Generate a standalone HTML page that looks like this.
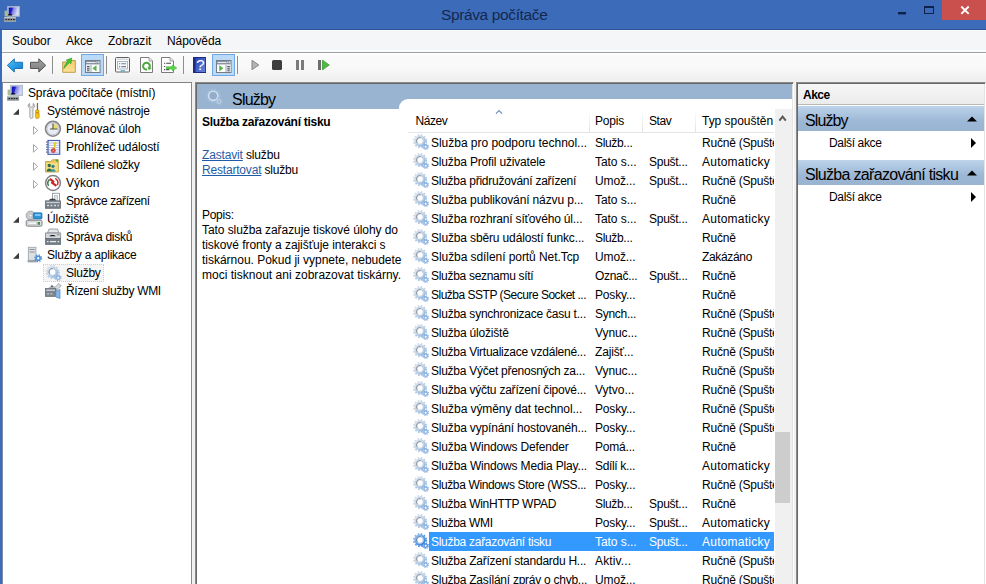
<!DOCTYPE html>
<html lang="cs"><head><meta charset="utf-8"><title>Správa počítače</title>
<style>
*{box-sizing:border-box;margin:0;padding:0}
html,body{width:986px;height:584px;overflow:hidden}
body{position:relative;background:#f0f0f0;font-family:"Liberation Sans",sans-serif;font-size:12px;color:#000;line-height:15px}
body>div,body>span,body>svg{position:absolute}
.t{position:absolute;white-space:nowrap;line-height:15px}
.t.b{font-size:16px;line-height:20px}
.t.b.tt{font-size:15.5px}
#titlebar{left:0;top:0;width:986px;height:30px;background:#3c6cb9;border-bottom:1px solid #2e5498}
#lborder{left:0;top:30px;width:2px;height:554px;background:#3c6cb9}
#close{left:942px;top:0;width:44px;height:20px;background:#c9504d}
#menubar{left:2px;top:30px;width:984px;height:22px;background:#f5f6f7;border-top:1px solid #fff;border-bottom:2px solid #fafbfc}
#menuline{left:2px;top:52px;width:984px;height:1px;background:#a0a0a0}
#toolbar{left:2px;top:53px;width:984px;height:25px;border-top:1px solid #fff;background:linear-gradient(#fbfbfb,#f8f8f8 60%,#f0f0f0)}
#tbi{left:0;top:53px}
#tree{left:2px;top:82px;width:190px;height:502px;background:#fff;border-top:1px solid #828282;border-right:1px solid #8a8a8a;border-left:1px solid #7f8ea6}
#treei{left:0;top:82px}
#tsel{left:43px;top:264px;width:61px;height:18px;background:#f5f5f5;border:1px dotted #cfcfcf}
#center{left:195px;top:82px;width:599px;height:502px;background:#fff;border-left:1px solid #8a8a8a;border-top:1px solid #8a8a8a;border-right:1px solid #fff;box-shadow:inset 1px 1px 0 #686868,inset -1px 0 0 #e3e3e3}
#chead{left:197px;top:84px;width:595px;height:25px;background:#99b4d1}
#listbg{left:399px;top:99px;width:393px;height:485px;background:#fff;border-top-left-radius:9px}
#hline{left:408px;top:132px;width:366px;height:1px;background:#e5e5e5}
.hsep{width:1px;top:110px;height:22px;background:linear-gradient(#fff,#e2e2e2)}
#list{left:0;top:0;width:774px;height:584px;overflow:hidden}
.row{position:absolute;left:411px;width:363px;height:19px}
.row .gear{position:absolute;left:1px;top:1px}
.row .c{position:absolute;top:3px;white-space:nowrap;line-height:15px}
.row .n{left:20px}
.row .p{left:184px}
.row .s{left:238px}
.row .ty{left:291px;width:72px;overflow:hidden}
.row.sel::before{content:"";position:absolute;left:18px;top:0;width:345px;height:19px;background:#3399ff}
.row.sel .c{color:#fff}
#vsb{left:775px;top:109px;width:17px;height:475px;background:#f0f0f0}
#thumb{left:775px;top:432px;width:15px;height:71px;background:#cdcdcd}
#actions{left:796px;top:82px;width:190px;height:502px;background:#fff;border-left:1px solid #8a8a8a;border-top:1px solid #8a8a8a;border-right:1px solid #fff;box-shadow:inset 1px 1px 0 #686868,inset -1px 0 0 #e3e3e3}
#ahead{left:798px;top:84px;width:186px;height:21px;background:linear-gradient(#f6f6f6,#ececec);border-bottom:1px solid #b8b8b8}
.asec{left:798px;width:186px;height:25px;background:linear-gradient(#bdd3ea,#9db8d6 60%,#99b4d1)}
a{color:#1f5ca8;text-decoration:underline}

</style></head>
<body>
<svg width="0" height="0" style="position:absolute"><defs>
<linearGradient id="gb" x1="0" y1="0" x2="1" y2="1"><stop offset="0" stop-color="#58c4f6"/><stop offset=".5" stop-color="#2a9ee6"/><stop offset="1" stop-color="#0d78cc"/></linearGradient>
<linearGradient id="gg" x1="0" y1="0" x2="0" y2="1"><stop offset="0" stop-color="#a2a2a2"/><stop offset="1" stop-color="#7c7c7c"/></linearGradient>
<linearGradient id="gr1" x1="0" y1="0" x2="1" y2="1"><stop offset="0" stop-color="#d9e2ec"/><stop offset=".55" stop-color="#bdd0e5"/><stop offset="1" stop-color="#86b2e2"/></linearGradient>
<linearGradient id="gr2" x1="0" y1="0" x2="1" y2="1"><stop offset="0" stop-color="#9cc4f0"/><stop offset=".55" stop-color="#5c9ce6"/><stop offset="1" stop-color="#2f7ad8"/></linearGradient>
<g id="gear"><circle cx="8" cy="7" r="6.100" fill="none" stroke="url(#gr1)" stroke-width="1.900" stroke-dasharray="1.650 1.544"/><circle cx="8" cy="7" r="4.600" fill="none" stroke="url(#gr1)" stroke-width="2.200"/><circle cx="8" cy="7" r="3.400" fill="#fbfdff" stroke="#a9b4c0" stroke-width=".7"/><path d="M5.100 8.800a3.400 3.400 0 0 1 3.500-5.200" fill="none" stroke="#7f8b98" stroke-width=".9"/><circle cx="13.700" cy="12.700" r="2.700" fill="none" stroke="#8db4df" stroke-width="1.300" stroke-dasharray="1.100 1.020"/><circle cx="13.700" cy="12.700" r="1.700" fill="#fff" stroke="#8db4df" stroke-width="1.400"/></g>
<g id="gears"><circle cx="8" cy="7" r="6.100" fill="none" stroke="url(#gr2)" stroke-width="1.900" stroke-dasharray="1.650 1.544"/><circle cx="8" cy="7" r="4.600" fill="none" stroke="url(#gr2)" stroke-width="2.200"/><circle cx="8" cy="7" r="3.400" fill="#fbfdff" stroke="#7fa4d0" stroke-width=".7"/><path d="M5.100 8.800a3.400 3.400 0 0 1 3.500-5.200" fill="none" stroke="#5d7896" stroke-width=".9"/><circle cx="13.700" cy="12.700" r="2.700" fill="none" stroke="#5595e4" stroke-width="1.300" stroke-dasharray="1.100 1.020"/><circle cx="13.700" cy="12.700" r="1.700" fill="#fff" stroke="#5595e4" stroke-width="1.400"/></g>
<linearGradient id="scr" x1="0" y1="0" x2="1" y2=".25"><stop offset="0" stop-color="#0a0ab4"/><stop offset=".38" stop-color="#2424cc"/><stop offset=".5" stop-color="#7c7ce0"/><stop offset="1" stop-color="#d6def8"/></linearGradient>
<g id="pc"><rect x="3.300" y=".2" width="12.400" height="10.300" fill="#c3cddd" stroke="#9fa9bb" stroke-width=".6"/><rect x="4.700" y="1.500" width="9.600" height="7.600" fill="url(#scr)"/><rect x=".6" y="4.600" width="2.700" height="5.800" fill="#a6bc96"/><path d="M3.800 9.400a2.300 1.700 0 0 1 4.600 0z" fill="#0e0e16"/><rect x=".1" y="11" width="11.800" height="4.700" fill="#8b9595"/><rect x=".1" y="11" width="11.800" height="1.100" fill="#bcc4c4"/><path d="M1.500 13.600h1.600M4 13.600h1.600M6.500 13.600h1.600M9 13.600h1.600" stroke="#20242a" stroke-width="1.400"/><rect x=".1" y="14.700" width="11.800" height="1" fill="#a9b1b1"/></g>
</defs></svg>
<div id="titlebar"></div>
<div id="lborder"></div>
<div id="close"></div>
<svg id="wbtn" style="left:890px;top:0" width="96" height="30" viewBox="890 0 96 30"><rect x="898" y="12" width="8" height="2.4" fill="#0e2148"/><rect x="924.5" y="7" width="9" height="6.5" fill="none" stroke="#0e2148" stroke-width="1"/><rect x="924" y="6" width="10" height="2" fill="#0e2148"/><path d="M961.3 6.5l7.4 7.4M968.7 6.5l-7.4 7.4" stroke="#fff" stroke-width="1.9" fill="none"/></svg>
<svg style="left:4px;top:6px" width="16" height="16" viewBox="0 0 16 16"><use href="#pc"/></svg>
<div id="menubar"></div>
<div id="menuline"></div>
<div id="toolbar"></div>
<svg id="tbi" width="340" height="26" viewBox="0 53 340 26">
<path d="M7.300 65.400l7-6.600v3.500h8.300v6.200h-8.300v3.500z" fill="url(#gb)" stroke="#2272b4" stroke-width="1" stroke-linejoin="round"/>
<path d="M45.800 65.400l-7-6.600v3.500h-8.300v6.200h8.300v3.500z" fill="url(#gg)" stroke="#555" stroke-width="1" stroke-linejoin="round"/>
<rect x="52" y="56" width="1" height="18" fill="#8e8e8e"/>
<linearGradient id="gf" x1="0" y1="0" x2="0" y2="1"><stop offset="0" stop-color="#f6cc6a"/><stop offset="1" stop-color="#fbe196"/></linearGradient><path d="M62.700 62h4.800l1.200-1.500h6.600v11.800h-12.600z" fill="url(#gf)" stroke="#b8923f" stroke-width=".9"/><path d="M63.800 68.600c.8-3.600 2.200-5.600 3.800-7l-1.400-1.500 5.600-2-.9 5.700-1.400-1.300c-2 1.700-3.600 3.800-5.700 6.100z" fill="#45c232" stroke="#349a28" stroke-width=".6"/>
<rect x="81.500" y="54.500" width="22" height="21" fill="#badaf8" stroke="#6fa8e6"/>
<rect x="85.500" y="60.500" width="14.500" height="12" fill="#fff" stroke="#737d8a"/><rect x="86" y="61" width="13.500" height="3" fill="#8a93a0"/><rect x="86.500" y="62" width="9" height="1" fill="#e8ecf0"/><rect x="96.300" y="61.600" width="1.100" height="1.100" fill="#fff"/><rect x="98" y="61.600" width="1.100" height="1.100" fill="#fff"/><rect x="86" y="64" width="13.500" height="1" fill="#c9d0d8"/><rect x="86" y="65" width="4.500" height="7" fill="#eef1f4"/><rect x="87" y="66" width="2.500" height="1.300" fill="#4a5058"/><rect x="87" y="68.200" width="2.500" height="1.300" fill="#4a5058"/><rect x="87" y="70.300" width="2.500" height="1" fill="#4a5058"/><rect x="90.500" y="65" width="1" height="7" fill="#9aa3ae"/><path d="M96.200 65.800v5l-3.400-2.500z" fill="#58b848" stroke="#3f9a33" stroke-width=".5"/>
<rect x="106" y="56" width="1" height="18" fill="#8e8e8e"/>
<rect x="115.500" y="57.500" width="14" height="14.500" rx="1" fill="#fff" stroke="#5f5f5f"/><rect x="116.500" y="58.500" width="12" height="1.500" fill="#d6dae0"/><rect x="117.500" y="61.500" width="10" height="7.500" fill="#f7f9fb" stroke="#9fb2c4" stroke-width=".9"/><path d="M119 63.800h1.200M121.300 63.800h4.700M119 66.600h1.200M121.300 66.600h4.700" stroke="#6f8296" stroke-width="1.100"/><rect x="120.500" y="70.200" width="4.500" height="1.300" fill="#5fa8b8"/>
<path d="M140.500 57.500h8.500l3.500 3.500v11.500h-12z" fill="#fff" stroke="#7b7b7b"/><path d="M149 57.500v3.500h3.500" fill="#eee" stroke="#8b8b8b" stroke-width=".8"/><path d="M147.090 69.550A3.400 3.400 0 1 1 149.700 67.360" fill="none" stroke="#49a93a" stroke-width="2"/><path d="M151.900 67.900L147.500 66.500L148.700 70.300z" fill="#49a93a"/>
<path d="M161.500 57.500h8.500l3.500 3.500v11.500h-12z" fill="#fff" stroke="#7b7b7b"/><path d="M170 57.500v3.500h3.500" fill="#eee" stroke="#8b8b8b" stroke-width=".8"/><path d="M164 63.300h1.200M166.200 63.300h4.800M164 66.500h1.200M164 69.600h1.200M166.200 69.600h3" stroke="#444" stroke-width="1.100"/><path d="M166.400 66.800h5.800v-1.700l4.600 2.800-4.600 2.800v-1.700h-5.800z" fill="#5ad548" stroke="#3fae32" stroke-width=".6"/>
<rect x="183" y="56" width="1" height="18" fill="#8e8e8e"/>
<linearGradient id="gh" x1="0" y1="0" x2="1" y2="1"><stop offset="0" stop-color="#2a42b4"/><stop offset="1" stop-color="#6686dc"/></linearGradient><rect x="193" y="57" width="13" height="16" fill="#1c2c84"/><rect x="195.500" y="58" width="9.700" height="14" fill="url(#gh)"/><text x="200.400" y="70.300" font-family="Liberation Sans,sans-serif" font-size="15.500" fill="#fff" text-anchor="middle">?</text>
<rect x="212.500" y="54.500" width="22" height="21" fill="#badaf8" stroke="#6fa8e6"/>
<rect x="216.500" y="60.500" width="14.500" height="12" fill="#fff" stroke="#737d8a"/><rect x="217" y="61" width="13.500" height="3" fill="#8a93a0"/><rect x="217.500" y="62" width="9" height="1" fill="#e8ecf0"/><rect x="227.300" y="61.600" width="1.100" height="1.100" fill="#fff"/><rect x="229" y="61.600" width="1.100" height="1.100" fill="#fff"/><rect x="217" y="64" width="13.500" height="1" fill="#c9d0d8"/><rect x="226.500" y="65" width="4" height="7" fill="#eef1f4"/><rect x="227.300" y="66" width="2.500" height="1.300" fill="#4a5058"/><rect x="227.300" y="68.200" width="2.500" height="1.300" fill="#4a5058"/><rect x="227.300" y="70.300" width="2.500" height="1" fill="#4a5058"/><rect x="225.500" y="65" width="1" height="7" fill="#9aa3ae"/><path d="M219.600 65.800v5l3.400-2.500z" fill="#58b848" stroke="#3f9a33" stroke-width=".5"/>
<rect x="237" y="56" width="1" height="18" fill="#8e8e8e"/>
<path d="M252 60.300l6.800 4.700-6.800 4.700z" fill="#b4b4b4" stroke="#7d7d7d" stroke-width=".9"/>
<rect x="272" y="60" width="10" height="10" rx="1.500" fill="#3d3d3d"/>
<rect x="296" y="60" width="3" height="10" fill="#7b7b7b"/><rect x="301" y="60" width="3" height="10" fill="#7b7b7b"/>
<rect x="318" y="60" width="3" height="10" fill="#6e6e6e"/><path d="M322.500 60.200l6.800 4.800-6.800 4.800z" fill="#52b843" stroke="#3a9a2e" stroke-width=".8"/>
</svg>
<div id="tree"></div>
<div id="tsel"></div>
<svg id="treei" width="192" height="220" viewBox="0 82 192 220">
<g fill="#3a3a3a"><path d="M19 108.800v5.900h-5.900z"/><path d="M19 216.800v5.900h-5.900z"/><path d="M19 252.800v5.900h-5.900z"/></g>
<g fill="#fff" stroke="#a6a6a6" stroke-width="1"><path d="M33.500 126.600l4.200 3.800-4.200 3.800z"/><path d="M33.500 144.600l4.200 3.800-4.200 3.800z"/><path d="M33.500 162.600l4.200 3.800-4.200 3.800z"/><path d="M33.500 180.600l4.200 3.800-4.200 3.800z"/></g>
<g transform="translate(7 85)"><use href="#pc"/></g>
<g><path d="M29.600 103.500c-1.700.8-2 3.300-.3 4.400l.6.500v8.700c0 1.900 3 1.900 3 0v-8.700l.6-.5c1.700-1.100 1.400-3.600-.3-4.400v2.700l-1.100.8h-1.400l-1.100-.8z" fill="#ececec" stroke="#8a8a8a" stroke-width=".8"/><rect x="36.800" y="103" width="1.300" height="7.500" fill="#8a6a3a"/><path d="M35.600 110.200h3.400v2h-.4v1h.6v4c0 1.800-3.800 1.800-3.800 0v-4h.6v-1h-.4z" fill="#f2c211" stroke="#b88a0a" stroke-width=".6"/><rect x="35.600" y="112.200" width="3.400" height="1" fill="#c87f10"/></g>
<g><circle cx="52.900" cy="128.800" r="7.400" fill="#e9ecf8" stroke="#868686" stroke-width="1.600"/><circle cx="52.900" cy="128.800" r="5.900" fill="none" stroke="#c7c9d3" stroke-width="1"/><path d="M53.300 123.800a5.200 5.200 0 0 1 4.800 4.700h-4.800z" fill="#e9da6c"/><path d="M53 123.500v5.600M50 129h7.500" stroke="#55552a" stroke-width="1.100" fill="none"/></g>
<g><rect x="48" y="140.500" width="11.700" height="13.800" fill="#fff" stroke="#4b61ad" stroke-width="1.200"/><path d="M49 143h10M49 145.300h10M49 147.600h10M49 149.900h10M49 152.200h10" stroke="#a9b9ea" stroke-width="1"/><path d="M46 142.200h2.800M46 144.700h2.800M46 147.200h2.800M46 149.700h2.800M46 152.200h2.800" stroke="#6a7cab" stroke-width="1.200"/><path d="M54.500 142.300l1.200.2-.6 6.500h-1.600z" fill="#e2c81c"/><circle cx="55" cy="143.300" r="1.400" fill="#e6d02a"/><circle cx="53.300" cy="150.600" r="2.400" fill="#d7323a"/><path d="M52.400 149.700l1.800 1.800M54.200 149.700l-1.800 1.800" stroke="#f7c8c8" stroke-width=".7"/></g>
<g><path d="M45.600 161.500h5.400l1.300-1.700h6v12.200h-12.700z" fill="#e9cd63" stroke="#c2a040" stroke-width=".9"/><path d="M46.200 163h11.600v8.500h-11.600z" fill="#f2dc85"/><path d="M55 159.800l3-.4-.4 3z" fill="#48a23c"/><circle cx="49.300" cy="165.500" r="1.700" fill="#2f6b4a"/><path d="M46.600 171.500c0-4 5.400-4 5.400 0z" fill="#2f6b4a"/><circle cx="53" cy="166.300" r="1.600" fill="#2f7f8a"/><path d="M50.600 171.800c0-3.800 5-3.800 5 0z" fill="#3a97a2"/></g>
<g><circle cx="53" cy="183" r="7.400" fill="#fff" stroke="#828282" stroke-width="1.500"/><path d="M48.600 185.800a5 5 0 0 1 .8-6.200" fill="none" stroke="#2f8050" stroke-width="1.500"/><path d="M55.200 178.400a5 5 0 0 1 2.200 6.800" fill="none" stroke="#cf2626" stroke-width="1.500"/><path d="M49.800 178.800l3.400 2.600-1 1.400 4.200 3" fill="none" stroke="#cf2020" stroke-width="2.200"/></g>
<g><rect x="52.500" y="193.300" width="7" height="10" fill="#fff" stroke="#8f959b" stroke-width=".9"/><rect x="54.500" y="195.500" width="3" height="5" fill="#dfe3e7" stroke="#a9afb5" stroke-width=".6"/><path d="M49 200.800c0-3 7-3 7 0z" fill="#3a4047"/><rect x="45.300" y="200.800" width="15.400" height="7.600" fill="#737b84" stroke="#5d656d" stroke-width=".6"/><rect x="46.300" y="201.800" width="13.400" height="1.400" fill="#c9ced4"/><path d="M47 205.500h2M50.500 205.500h2M54 205.500h2M57.500 205.500h1.500" stroke="#d8dce0" stroke-width="1.600"/></g>
<g><circle cx="30.600" cy="215.600" r="4.500" fill="#c9cbcd" stroke="#9a9c9e" stroke-width=".8"/><circle cx="30.600" cy="215.600" r="1.400" fill="#f4f4f4" stroke="#a9abad" stroke-width=".5"/><rect x="33.300" y="212.800" width="8.700" height="6.200" rx="1" fill="#2b93d6" stroke="#1a6fae" stroke-width=".7"/><rect x="35" y="214.200" width="5.600" height="1.600" fill="#8fd0f4"/><rect x="26.200" y="220.200" width="15.800" height="6" rx="1.300" fill="#dcdedf" stroke="#717578" stroke-width=".9"/><rect x="28" y="222" width="8.500" height="2.400" fill="#f6f6f6" stroke="#b5b8ba" stroke-width=".5"/><rect x="37.600" y="222" width="2.400" height="2.800" fill="#3f8f4a"/></g>
<g><path d="M47.500 233l1.500-4h8.500l1.500 4z" fill="#e3e5e7" stroke="#8b9096" stroke-width=".8"/><rect x="45.400" y="233" width="15.300" height="5.400" fill="#d3d6da" stroke="#80868c" stroke-width=".8"/><path d="M49.300 236.300c1-1.700 5.400-1.700 6.400 0z" fill="#17191b"/><rect x="56.800" y="234" width="2.800" height="1.400" fill="#9aa0a6"/><rect x="45.400" y="238.600" width="15.300" height="6" fill="#747c85" stroke="#5c646c" stroke-width=".6"/><path d="M47 241.600h1.600M50 241.600h6M57.500 241.600h1.600" stroke="#e9ecee" stroke-width="1.300"/></g>
<g><rect x="28.300" y="247.300" width="7.600" height="13" fill="#dde0e3" stroke="#9a9fa5" stroke-width=".8"/><path d="M29.500 249.500h5.200M29.500 252h5.200" stroke="#8d9298" stroke-width="1.100"/><rect x="27.600" y="260" width="9" height="2.400" fill="#9ba1a7"/><circle cx="38.200" cy="258.300" r="3.300" fill="none" stroke="#4d8fd6" stroke-width="1.500" stroke-dasharray="1.300 1.290"/><circle cx="38.200" cy="258.300" r="2" fill="#fff" stroke="#4d8fd6" stroke-width="1.600"/></g>
<g transform="translate(44.500 265)"><use href="#gear"/></g>
<g><path d="M53.500 288.500l5.500-5 2.200 2.300-4.700 4.200z" fill="#d9dde1" stroke="#8b9197" stroke-width=".7"/><circle cx="52" cy="286.800" r="1.300" fill="#1c1c1c"/><path d="M47.500 288.300l3.500-1.800h4l-1.500 1.800z" fill="#aab0b6"/><rect x="45.300" y="288.300" width="10.700" height="8.300" fill="#7d858d" stroke="#5e666e" stroke-width=".6"/><rect x="46.300" y="289.500" width="8.700" height="1.500" fill="#c5cad0"/><path d="M47 293.800h2M50.300 293.800h2" stroke="#c5cad0" stroke-width="1.300"/><path d="M55.800 291l4.200-1.500v9l-4.200-1.500z" fill="#86b6e6" stroke="#4e86c2" stroke-width=".7"/></g>
</svg>
<div id="center"></div>
<div id="chead"></div>
<svg id="chi" style="left:204px;top:86px" width="22" height="22" viewBox="204 86 22 22"><circle cx="213.200" cy="95.800" r="6.300" fill="none" stroke="#a8c0dc" stroke-width="1.500" stroke-dasharray="1.700 1.598"/><circle cx="213.200" cy="95.800" r="4.600" fill="#90a9c7" stroke="#d2e1f1" stroke-width="1.600"/><circle cx="213.200" cy="95.800" r="2" fill="none" stroke="#9db5d2" stroke-width=".8"/><circle cx="219" cy="101.500" r="3.100" fill="none" stroke="#a9c1dc" stroke-width="1.100" stroke-dasharray="1.200 1.234"/><circle cx="219" cy="101.500" r="1.900" fill="#9cb6d4" stroke="#bdd0e7" stroke-width="1.100"/></svg>
<div id="listbg"></div>
<div id="hline"></div>
<div class="hsep" style="left:589px"></div>
<div class="hsep" style="left:642px"></div>
<div class="hsep" style="left:695px"></div>
<svg style="left:494px;top:108px" width="10" height="8" viewBox="0 0 10 8"><path d="M2 5.700l3-3 3 3" fill="none" stroke="#6a8fbf" stroke-width="1.200"/></svg>
<div id="actions"></div>
<div id="ahead"></div>
<div class="asec" style="top:106px"></div>
<div class="asec" style="top:160px"></div>
<span class="t" id="m1" style="left:12px;top:34.00px;letter-spacing:0.016px;">Soubor</span>
<span class="t" id="m2" style="left:66px;top:34.00px;letter-spacing:-0.022px;">Akce</span>
<span class="t" id="m3" style="left:108px;top:34.00px;letter-spacing:0.005px;">Zobrazit</span>
<span class="t" id="m4" style="left:167px;top:34.00px;letter-spacing:-0.077px;">Nápověda</span>
<span class="t" id="t0" style="left:28px;top:86.00px;letter-spacing:-0.138px;">Správa počítače (místní)</span>
<span class="t" id="t1" style="left:47px;top:104.00px;letter-spacing:-0.149px;">Systémové nástroje</span>
<span class="t" id="t2" style="left:66px;top:122.00px;letter-spacing:-0.030px;">Plánovač úloh</span>
<span class="t" id="t3" style="left:66px;top:140.00px;letter-spacing:-0.105px;">Prohlížeč událostí</span>
<span class="t" id="t4" style="left:66px;top:158.00px;letter-spacing:-0.277px;">Sdílené složky</span>
<span class="t" id="t5" style="left:66px;top:176.00px;letter-spacing:0.008px;">Výkon</span>
<span class="t" id="t6" style="left:66px;top:194.00px;letter-spacing:-0.397px;">Správce zařízení</span>
<span class="t" id="t7" style="left:47px;top:212.00px;letter-spacing:-0.098px;">Úložiště</span>
<span class="t" id="t8" style="left:66px;top:230.00px;letter-spacing:-0.273px;">Správa disků</span>
<span class="t" id="t9" style="left:47px;top:248.00px;letter-spacing:-0.229px;">Služby a aplikace</span>
<span class="t" id="t10" style="left:66px;top:266.00px;letter-spacing:-0.239px;">Služby</span>
<span class="t" id="t11" style="left:66px;top:284.00px;letter-spacing:-0.302px;">Řízení služby WMI</span>
<span class="t" id="d0" style="left:202px;top:115.00px;letter-spacing:-0.275px;font-weight:bold">Služba zařazování tisku</span>
<span class="t" id="d3" style="left:202px;top:208.00px;letter-spacing:-0.277px;">Popis:</span>
<span class="t" id="d4" style="left:202px;top:223.00px;letter-spacing:-0.078px;">Tato služba zařazuje tiskové úlohy do</span>
<span class="t" id="d5" style="left:202px;top:238.00px;letter-spacing:-0.063px;">tiskové fronty a zajišťuje interakci s</span>
<span class="t" id="d6" style="left:202px;top:253.00px;letter-spacing:-0.017px;">tiskárnou. Pokud ji vypnete, nebudete</span>
<span class="t" id="d7" style="left:202px;top:268.00px;letter-spacing:0.015px;">moci tisknout ani zobrazovat tiskárny.</span>
<span class="t" id="h1" style="left:415.5px;top:114.00px;letter-spacing:-0.423px;">Název</span>
<span class="t" id="h2" style="left:595px;top:114.00px;letter-spacing:-0.166px;">Popis</span>
<span class="t" id="h3" style="left:649px;top:114.00px;letter-spacing:-0.429px;">Stav</span>
<span class="t" id="h4" style="left:702px;top:114.00px;letter-spacing:-0.024px;">Typ spouštěn</span>
<span class="t" id="a0" style="left:803px;top:88.00px;letter-spacing:-0.522px;font-weight:bold">Akce</span>
<span class="t" id="a2" style="left:829px;top:136.00px;letter-spacing:-0.343px;">Další akce</span>
<span class="t" id="a4" style="left:829px;top:190.00px;letter-spacing:-0.343px;">Další akce</span>
<span class="t b tt" id="title" style="left:441px;top:5.00px;letter-spacing:-0.374px;color:#14284f">Správa počítače</span>
<span class="t b" id="ch" style="left:232px;top:90.00px;letter-spacing:-0.789px;">Služby</span>
<span class="t b" id="a1" style="left:805px;top:111.00px;letter-spacing:-0.905px;">Služby</span>
<span class="t b" id="a3" style="left:805px;top:165.00px;letter-spacing:-0.691px;">Služba zařazování tisku</span>
<span class="t" id="d1" style="left:202px;top:148px;letter-spacing:-0.156px;"><a>Zastavit</a> službu</span>
<span class="t" id="d2" style="left:202px;top:163px;letter-spacing:-0.188px;"><a>Restartovat</a> službu</span>
<div id="list">
<div class="row" style="top:133px"><svg class="gear" width="17" height="17" viewBox="0 0 17 17"><use href="#gear"/></svg><span class="c n" id="n0" style="letter-spacing:-0.027px;">Služba pro podporu technol...</span><span class="c p" id="p0" style="letter-spacing:-0.329px;">Služb...</span><span class="c ty" id="y0" style="letter-spacing:-0.215px;">Ručně (Spuště</span></div>
<div class="row" style="top:152px"><svg class="gear" width="17" height="17" viewBox="0 0 17 17"><use href="#gear"/></svg><span class="c n" id="n1" style="letter-spacing:-0.164px;">Služba Profil uživatele</span><span class="c p" id="p1" style="letter-spacing:-0.059px;">Tato s...</span><span class="c s" id="s1" style="letter-spacing:-0.273px;">Spušt...</span><span class="c ty" id="y1" style="letter-spacing:0.231px;">Automaticky</span></div>
<div class="row" style="top:171px"><svg class="gear" width="17" height="17" viewBox="0 0 17 17"><use href="#gear"/></svg><span class="c n" id="n2" style="letter-spacing:-0.250px;">Služba přidružování zařízení</span><span class="c p" id="p2" style="letter-spacing:-0.121px;">Umož...</span><span class="c s" id="s2" style="letter-spacing:-0.273px;">Spušt...</span><span class="c ty" id="y2" style="letter-spacing:-0.215px;">Ručně (Spuště</span></div>
<div class="row" style="top:190px"><svg class="gear" width="17" height="17" viewBox="0 0 17 17"><use href="#gear"/></svg><span class="c n" id="n3" style="letter-spacing:-0.131px;">Služba publikování názvu p...</span><span class="c p" id="p3" style="letter-spacing:-0.059px;">Tato s...</span><span class="c ty" id="y3" style="letter-spacing:-0.177px;">Ručně</span></div>
<div class="row" style="top:209px"><svg class="gear" width="17" height="17" viewBox="0 0 17 17"><use href="#gear"/></svg><span class="c n" id="n4" style="letter-spacing:-0.176px;">Služba rozhraní síťového úl...</span><span class="c p" id="p4" style="letter-spacing:-0.059px;">Tato s...</span><span class="c s" id="s4" style="letter-spacing:-0.273px;">Spušt...</span><span class="c ty" id="y4" style="letter-spacing:0.231px;">Automaticky</span></div>
<div class="row" style="top:228px"><svg class="gear" width="17" height="17" viewBox="0 0 17 17"><use href="#gear"/></svg><span class="c n" id="n5" style="letter-spacing:-0.138px;">Služba sběru událostí funkc...</span><span class="c p" id="p5" style="letter-spacing:-0.329px;">Služb...</span><span class="c ty" id="y5" style="letter-spacing:-0.177px;">Ručně</span></div>
<div class="row" style="top:247px"><svg class="gear" width="17" height="17" viewBox="0 0 17 17"><use href="#gear"/></svg><span class="c n" id="n6" style="letter-spacing:-0.068px;">Služba sdílení portů Net.Tcp</span><span class="c p" id="p6" style="letter-spacing:-0.121px;">Umož...</span><span class="c ty" id="y6" style="letter-spacing:-0.338px;">Zakázáno</span></div>
<div class="row" style="top:266px"><svg class="gear" width="17" height="17" viewBox="0 0 17 17"><use href="#gear"/></svg><span class="c n" id="n7" style="letter-spacing:-0.298px;">Služba seznamu sítí</span><span class="c p" id="p7" style="letter-spacing:-0.311px;">Označ...</span><span class="c s" id="s7" style="letter-spacing:-0.273px;">Spušt...</span><span class="c ty" id="y7" style="letter-spacing:-0.177px;">Ručně</span></div>
<div class="row" style="top:285px"><svg class="gear" width="17" height="17" viewBox="0 0 17 17"><use href="#gear"/></svg><span class="c n" id="n8" style="letter-spacing:-0.495px;">Služba SSTP (Secure Socket ...</span><span class="c p" id="p8" style="letter-spacing:-0.175px;">Posky...</span><span class="c ty" id="y8" style="letter-spacing:-0.177px;">Ručně</span></div>
<div class="row" style="top:304px"><svg class="gear" width="17" height="17" viewBox="0 0 17 17"><use href="#gear"/></svg><span class="c n" id="n9" style="letter-spacing:-0.236px;">Služba synchronizace času t...</span><span class="c p" id="p9" style="letter-spacing:-0.282px;">Synch...</span><span class="c ty" id="y9" style="letter-spacing:-0.215px;">Ručně (Spuště</span></div>
<div class="row" style="top:323px"><svg class="gear" width="17" height="17" viewBox="0 0 17 17"><use href="#gear"/></svg><span class="c n" id="n10" style="letter-spacing:-0.201px;">Služba úložiště</span><span class="c p" id="p10" style="letter-spacing:-0.090px;">Vynuc...</span><span class="c ty" id="y10" style="letter-spacing:-0.215px;">Ručně (Spuště</span></div>
<div class="row" style="top:342px"><svg class="gear" width="17" height="17" viewBox="0 0 17 17"><use href="#gear"/></svg><span class="c n" id="n11" style="letter-spacing:-0.265px;">Služba Virtualizace vzdálené...</span><span class="c p" id="p11" style="letter-spacing:-0.172px;">Zajišť...</span><span class="c ty" id="y11" style="letter-spacing:-0.215px;">Ručně (Spuště</span></div>
<div class="row" style="top:361px"><svg class="gear" width="17" height="17" viewBox="0 0 17 17"><use href="#gear"/></svg><span class="c n" id="n12" style="letter-spacing:-0.256px;">Služba Výčet přenosných za...</span><span class="c p" id="p12" style="letter-spacing:-0.090px;">Vynuc...</span><span class="c ty" id="y12" style="letter-spacing:-0.215px;">Ručně (Spuště</span></div>
<div class="row" style="top:380px"><svg class="gear" width="17" height="17" viewBox="0 0 17 17"><use href="#gear"/></svg><span class="c n" id="n13" style="letter-spacing:-0.228px;">Služba výčtu zařízení čipové...</span><span class="c p" id="p13" style="letter-spacing:-0.022px;">Vytvo...</span><span class="c ty" id="y13" style="letter-spacing:-0.215px;">Ručně (Spuště</span></div>
<div class="row" style="top:399px"><svg class="gear" width="17" height="17" viewBox="0 0 17 17"><use href="#gear"/></svg><span class="c n" id="n14" style="letter-spacing:-0.076px;">Služba výměny dat technol...</span><span class="c p" id="p14" style="letter-spacing:-0.175px;">Posky...</span><span class="c ty" id="y14" style="letter-spacing:-0.215px;">Ručně (Spuště</span></div>
<div class="row" style="top:418px"><svg class="gear" width="17" height="17" viewBox="0 0 17 17"><use href="#gear"/></svg><span class="c n" id="n15" style="letter-spacing:-0.165px;">Služba vypínání hostovanéh...</span><span class="c p" id="p15" style="letter-spacing:-0.175px;">Posky...</span><span class="c ty" id="y15" style="letter-spacing:-0.215px;">Ručně (Spuště</span></div>
<div class="row" style="top:437px"><svg class="gear" width="17" height="17" viewBox="0 0 17 17"><use href="#gear"/></svg><span class="c n" id="n16" style="letter-spacing:-0.170px;">Služba Windows Defender</span><span class="c p" id="p16" style="letter-spacing:-0.194px;">Pomá...</span><span class="c ty" id="y16" style="letter-spacing:-0.177px;">Ručně</span></div>
<div class="row" style="top:456px"><svg class="gear" width="17" height="17" viewBox="0 0 17 17"><use href="#gear"/></svg><span class="c n" id="n17" style="letter-spacing:-0.161px;">Služba Windows Media Play...</span><span class="c p" id="p17" style="letter-spacing:-0.336px;">Sdílí k...</span><span class="c ty" id="y17" style="letter-spacing:0.231px;">Automaticky</span></div>
<div class="row" style="top:475px"><svg class="gear" width="17" height="17" viewBox="0 0 17 17"><use href="#gear"/></svg><span class="c n" id="n18" style="letter-spacing:-0.368px;">Služba Windows Store (WSS...</span><span class="c p" id="p18" style="letter-spacing:-0.175px;">Posky...</span><span class="c ty" id="y18" style="letter-spacing:-0.215px;">Ručně (Spuště</span></div>
<div class="row" style="top:494px"><svg class="gear" width="17" height="17" viewBox="0 0 17 17"><use href="#gear"/></svg><span class="c n" id="n19" style="letter-spacing:-0.271px;">Služba WinHTTP WPAD</span><span class="c p" id="p19" style="letter-spacing:-0.329px;">Služb...</span><span class="c s" id="s19" style="letter-spacing:-0.273px;">Spušt...</span><span class="c ty" id="y19" style="letter-spacing:-0.177px;">Ručně</span></div>
<div class="row" style="top:513px"><svg class="gear" width="17" height="17" viewBox="0 0 17 17"><use href="#gear"/></svg><span class="c n" id="n20" style="letter-spacing:-0.289px;">Služba WMI</span><span class="c p" id="p20" style="letter-spacing:-0.175px;">Posky...</span><span class="c s" id="s20" style="letter-spacing:-0.273px;">Spušt...</span><span class="c ty" id="y20" style="letter-spacing:0.231px;">Automaticky</span></div>
<div class="row sel" style="top:532px"><svg class="gear" width="17" height="17" viewBox="0 0 17 17"><use href="#gears"/></svg><span class="c n" id="n21" style="letter-spacing:-0.284px;">Služba zařazování tisku</span><span class="c p" id="p21" style="letter-spacing:-0.059px;">Tato s...</span><span class="c s" id="s21" style="letter-spacing:-0.273px;">Spušt...</span><span class="c ty" id="y21" style="letter-spacing:0.231px;">Automaticky</span></div>
<div class="row" style="top:551px"><svg class="gear" width="17" height="17" viewBox="0 0 17 17"><use href="#gear"/></svg><span class="c n" id="n22" style="letter-spacing:-0.255px;">Služba Zařízení standardu H...</span><span class="c p" id="p22" style="letter-spacing:0.147px;">Aktiv...</span><span class="c ty" id="y22" style="letter-spacing:-0.215px;">Ručně (Spuště</span></div>
<div class="row" style="top:570px"><svg class="gear" width="17" height="17" viewBox="0 0 17 17"><use href="#gear"/></svg><span class="c n" id="n23" style="letter-spacing:-0.258px;">Služba Zasílání zpráv o chyb...</span><span class="c p" id="p23" style="letter-spacing:-0.121px;">Umož...</span><span class="c ty" id="y23" style="letter-spacing:-0.215px;">Ručně (Spuště</span></div>
</div>
<div id="vsb"></div>
<div id="thumb"></div>
<svg style="left:776px;top:113px" width="13" height="10" viewBox="0 0 13 10"><path d="M3.400 7.600L6.600 3.700L9.800 7.600" fill="none" stroke="#5a5a5a" stroke-width="2"/></svg>
<svg style="left:960px;top:106px" width="24" height="100" viewBox="960 106 24 100"><path d="M967 121.500l5-5 5 5z" fill="#000"/><path d="M967 175.500l5-5 5 5z" fill="#000"/><path d="M971 138v10l5-5z" fill="#000"/><path d="M971 192v10l5-5z" fill="#000"/></svg>
</body></html>
